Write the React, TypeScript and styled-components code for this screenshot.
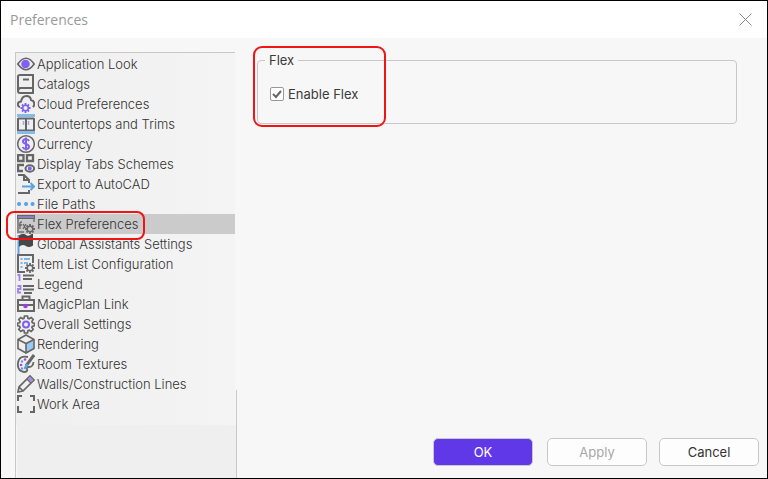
import React from "react";
import styled, { createGlobalStyle, css } from "styled-components";

const GlobalStyle = createGlobalStyle`
  *, *::before, *::after { box-sizing: border-box; }
  body { margin: 0; background: #f7f7f7; font-family: Inter, "Liberation Sans", sans-serif; font-size: 13px; color: #3c3c3c; }
`;

const highlight = css`
  content: "";
  position: absolute;
  border: 2px solid #f01414;
  pointer-events: none;
`;

const Dialog = styled.main`
  display: flex;
  flex-direction: column;
  min-height: 100vh;
  border: 1px solid #000;
  background: #f7f7f7;
`;

const TitleBar = styled.header`
  display: flex;
  align-items: center;
  justify-content: space-between;
  height: 37px;
  padding: 0 15px 0 9px;
  background: #fff;
`;

const Title = styled.h1`
  margin: 0;
  font: 400 14px/20px "Open Sans", sans-serif;
  color: #999;
`;

const CloseButton = styled.button`
  display: flex;
  padding: 0;
  border: 0;
  background: none;
  color: #8a8a8a;
`;

const Body = styled.div`
  display: flex;
  flex: 1;
`;

const Sidebar = styled.nav`
  display: flex;
  flex-direction: column;
  flex: none;
  width: 222px;
  margin: 14px 0 0 14px;
  border-left: 1px solid #c8c8c8;
`;

const List = styled.ul`
  flex: none;
  height: 373px;
  margin: 0 2px 0 0;
  padding: 1px 0 0 1px;
  border-top: 1px solid #c8c8c8;
  list-style: none;
  background: linear-gradient(90deg, #efefef, #f4f4f4);
`;

const Filler = styled.div`
  position: relative;
  flex: 1;
  margin-left: 1px;
  border-right: 1px solid #c8c8c8;
  background: #efefef;

  &::before {
    content: "";
    position: absolute;
    right: -1px;
    bottom: 100%;
    height: 35px;
    border-right: 1px solid #c8c8c8;
  }
`;

const Item = styled.li<{ $selected: boolean }>`
  position: relative;
  background: ${(p) => (p.$selected ? "#cbcbcb" : "transparent")};

  ${(p) =>
    p.$selected &&
    css`
      &::after {
        ${highlight}
        z-index: 1;
        inset: -3px auto -6px -11px;
        width: 139px;
        border-radius: 8px;
      }
    `}
`;

const ItemButton = styled.button`
  display: flex;
  align-items: center;
  gap: 2px;
  width: 100%;
  height: 20px;
  padding: 0;
  border: 0;
  background: none;
  color: #333;
  font: 300 13px/20px Inter, sans-serif;
  white-space: nowrap;
`;

const Content = styled.section`
  display: flex;
  flex: 1;
  flex-direction: column;
  justify-content: space-between;
  padding: 14px 8px 12px 20px;
`;

const Marked = styled.div`
  position: relative;
  margin-right: 22px;

  &::after {
    ${highlight}
    left: -4px;
    top: -6px;
    width: 133px;
    height: 81px;
    border-radius: 9px;
  }
`;

const Group = styled.fieldset`
  min-width: 0;
  height: 72px;
  margin: 0;
  padding: 17px 12px 0;
  border: 1px solid #c8c8c8;
  border-radius: 4px;
`;

const GroupTitle = styled.legend`
  margin-left: -5px;
  padding: 0 4px;
  line-height: 16px;
`;

const CheckLabel = styled.label`
  display: flex;
  align-items: center;
  gap: 4px;
  width: max-content;
  line-height: 18px;
`;

const CheckBox = styled.input`
  appearance: none;
  width: 14px;
  height: 14px;
  margin: 0;
  border: 1px solid #999;
  border-radius: 2px;
  background: #fff;
`;

const CheckHolder = styled.span`
  display: grid;
  > * { grid-area: 1 / 1; }
  svg { pointer-events: none; opacity: 0; }
  input:checked + svg { opacity: 1; }
`;

const Actions = styled.footer`
  display: flex;
  justify-content: flex-end;
  gap: 12px;
`;

const ActionButton = styled.button<{ $primary?: boolean }>`
  width: 100px;
  height: 28px;
  margin-right: ${(p) => (p.$primary ? "2px" : "0")};
  border: 1px solid #c8c8c8;
  border-radius: 5px;
  background: ${(p) => (p.$primary ? "#6038e8" : "#fdfdfd")};
  color: ${(p) => (p.$primary ? "#fff" : "#333")};
  font: 400 13px/20px Inter, sans-serif;

  &:disabled { color: #a8a8a8; }
`;

const Glyph = styled.svg`
  flex: none;
  display: block;
  fill: none;
  stroke: #666;
  stroke-width: 2;
`;

const V = "#8060f0";
const B = "#5aa2e2";
const gear = "M0-5v2M0 3v2M-5 0h2M3 0h2M-3.500-3.500l1.300 1.300M2.200 2.200l1.300 1.300M3.500-3.500l-1.300 1.300M-2.200 2.200l-1.300 1.300";

const Cog = ({ x, y, color }: { x: number; y: number; color: string }) => (
  <g transform={`translate(${x} ${y})`} stroke={color}>
    <circle r="2.8" strokeWidth="1.5" />
    <path d={gear} strokeWidth="1.800" />
  </g>
);

const icons: Record<string, React.ReactNode> = {
  eye: <><path d="M.8 10Q9-1.500 17.2 10 9 21.500.8 10Z" strokeWidth="1.700" /><circle cx="8.500" cy="10" r="4.300" fill={V} stroke="none" /></>,
  book: <path d="M1 17V2.500Q1 1 3 1h13v18H3Q1 19 1 17t2-3h13M6 5.500h6" />,
  cloud: <><path d="M3 13Q.8 12.500.8 10.500 1 7.500 4 7.500 5 2 9.500 2q4 0 4.500 4 3.300.5 3.300 4 0 2-1.500 3" /><Cog x={8.500} y={14} color={V} /></>,
  counter: <><path d="M1 4v13h16V4M9 4v13M1 4.500h16M1 16.500h16" /><path d="M0 1.500h18M0 18.500h18" stroke="#86bae8" strokeWidth="3" /><path d="M6.500 7v4M11.500 7v4" stroke="#b0a0ee" strokeWidth="1.500" /></>,
  dollar: <><circle cx="9" cy="10" r="8.300" strokeWidth="1.500" /><path d="M12 7Q11 5 9 5 6 5 6 7.500c0 3 6 2 6 5Q12 15 9 15q-2.500 0-3.300-2M9 3.500v13" stroke={V} /></>,
  tabs: <><path d="M1 1h5.500v6H1ZM10 1h6v6h-6ZM7 11H1v6h5" strokeWidth="2.300" /><ellipse cx="12.800" cy="14.500" rx="4.300" ry="3.200" /><circle cx="12.800" cy="14.500" r="1" stroke={V} /></>,
  exportFile: <><path d="M1 1h6l5 5v3M7 1v5h5M12 16v3H1" /><path d="M5 12.500h12M13.500 9l3.500 3.500-3.500 3.500" stroke={B} /></>,
  dots: <path d="M2 10h.1M9 10h.1M15.500 10h.1" stroke={B} strokeWidth="4" strokeLinecap="round" />,
  flex: <><path d="M7 18H1V3h16v5" stroke="#888" /><path d="M0 3h18" strokeWidth="4" /><path d="M1 3h16" stroke="#9a88e4" strokeWidth="1.500" /><path d="M3 15V9q0-1 2-1M2 11h3M6 10l3 5M9 10l-3 5" strokeWidth="1.300" /><Cog x={13} y={15} color="#666" /></>,
  flag: <><path d="M1.500 1v19" stroke={B} /><path d="M3 2q3-2 6 0t6-1v10q-3 2-6 0t-6 0Z" fill="#484848" stroke="#484848" /></>,
  list: <><path d="M8 18H1V1h15v8" /><path d="M3.500 5h2M7 5h6M3.500 9h2M7 9h4M3.500 13h2" stroke={B} strokeWidth="1.500" /><Cog x={13} y={14} color="#666" /></>,
  legend: <><path d="M6 1.500h11M6 5h9M6 12h11M6 15.500h11M7 19h8" /><path d="M.5 1h2v6M.5 12h3v3H1v3.500h3" stroke="#9b83ee" strokeWidth="1.800" /></>,
  briefcase: <><path d="M1 6h16v11H1ZM5.500 6V2.500h7V6M1 11h16" /><circle cx="8.500" cy="12" r="2.300" fill="#9b3ce9" stroke="none" /></>,
  gear: <><path d="M7.500 2h3l.5 2.300 1.200.5 2-1.300 2 2-1.300 2.100.5 1.200 2.100.5v2.500l-2.100.5-.5 1.200 1.300 2-2 2-2-1.300-1.200.5-.5 2.300h-3L7 16.700l-1.200-.5-2 1.300-2-2 1.300-2-.5-1.200-2-.5V9.300l2-.5.5-1.200-1.300-2.100 2-2 2 1.300L7 4.300Z" strokeWidth="1.700" /><circle cx="9" cy="10.500" r="3" stroke={V} /></>,
  cube: <><path d="M9 9.500V19l8-4V5.500Z" fill="#9bc9f5" stroke="none" /><path d="M9 1l8 4.500v9L9 19l-8-4.500v-9ZM1 5.500l8 4 8-4M9 9.500V19" strokeWidth="1.600" /></>,
  palette: <><path d="M11 3Q2 1 1 9t6 9q4 0 3-3-.5-2 2-2 4 0 4.500-5" strokeWidth="1.800" /><path d="M9 12l8-11" strokeWidth="3" /><path d="M4 11h.1M8 5.500h.1" stroke="#ad46ea" strokeWidth="2.600" strokeLinecap="round" /><path d="M5 7.500h.1M5 14.500h.1M10 11l-2 3" stroke={B} strokeWidth="2.400" strokeLinecap="round" /></>,
  pencil: <><path d="M1 18l1-5L13 2l4 4L6 17ZM2 13l4 4M10 5l4 4" strokeWidth="1.700" /><path d="M12 4l3 3" stroke="#a18ceb" strokeWidth="3.500" /></>,
  area: <path d="M1 7V2h4M13 2h4v5M17 12v6h-4M5 18H1v-6" />,
};

const items: [string, string][] = [
  ["Application Look", "eye"], ["Catalogs", "book"], ["Cloud Preferences", "cloud"],
  ["Countertops and Trims", "counter"], ["Currency", "dollar"], ["Display Tabs Schemes", "tabs"],
  ["Export to AutoCAD", "exportFile"], ["File Paths", "dots"], ["Flex Preferences", "flex"],
  ["Global Assistants Settings", "flag"], ["Item List Configuration", "list"], ["Legend", "legend"],
  ["MagicPlan Link", "briefcase"], ["Overall Settings", "gear"], ["Rendering", "cube"],
  ["Room Textures", "palette"], ["Walls/Construction Lines", "pencil"], ["Work Area", "area"],
];

export default function App() {
  const [selected, setSelected] = React.useState("Flex Preferences");
  return (
    <>
      <GlobalStyle />
      <Dialog>
        <TitleBar>
          <Title>Preferences</Title>
          <CloseButton aria-label="Close">
            <svg width="13" height="13" viewBox="0 0 13 13" fill="none" stroke="currentColor"><path d="M.5.5l12 12M12.500.5l-12 12" /></svg>
          </CloseButton>
        </TitleBar>
        <Body>
          <Sidebar aria-label="Preference pages">
            <List>
              {items.map(([name, icon]) => (
                <Item key={name} $selected={name === selected}>
                  <ItemButton onClick={() => setSelected(name)}>
                    <Glyph width="18" height="20" viewBox="0 0 18 20" aria-hidden="true">{icons[icon]}</Glyph>
                    {name}
                  </ItemButton>
                </Item>
              ))}
            </List>
            <Filler />
          </Sidebar>
          <Content>
            <Marked>
              <Group>
                <GroupTitle>Flex</GroupTitle>
                <CheckLabel>
                  <CheckHolder>
                    <CheckBox type="checkbox" defaultChecked />
                    <svg width="14" height="14" viewBox="0 0 14 14" fill="none" stroke="#666" strokeWidth="2"><path d="M3 7l3 3 5-6" /></svg>
                  </CheckHolder>
                  Enable Flex
                </CheckLabel>
              </Group>
            </Marked>
            <Actions>
              <ActionButton $primary>OK</ActionButton>
              <ActionButton disabled>Apply</ActionButton>
              <ActionButton>Cancel</ActionButton>
            </Actions>
          </Content>
        </Body>
      </Dialog>
    </>
  );
}
